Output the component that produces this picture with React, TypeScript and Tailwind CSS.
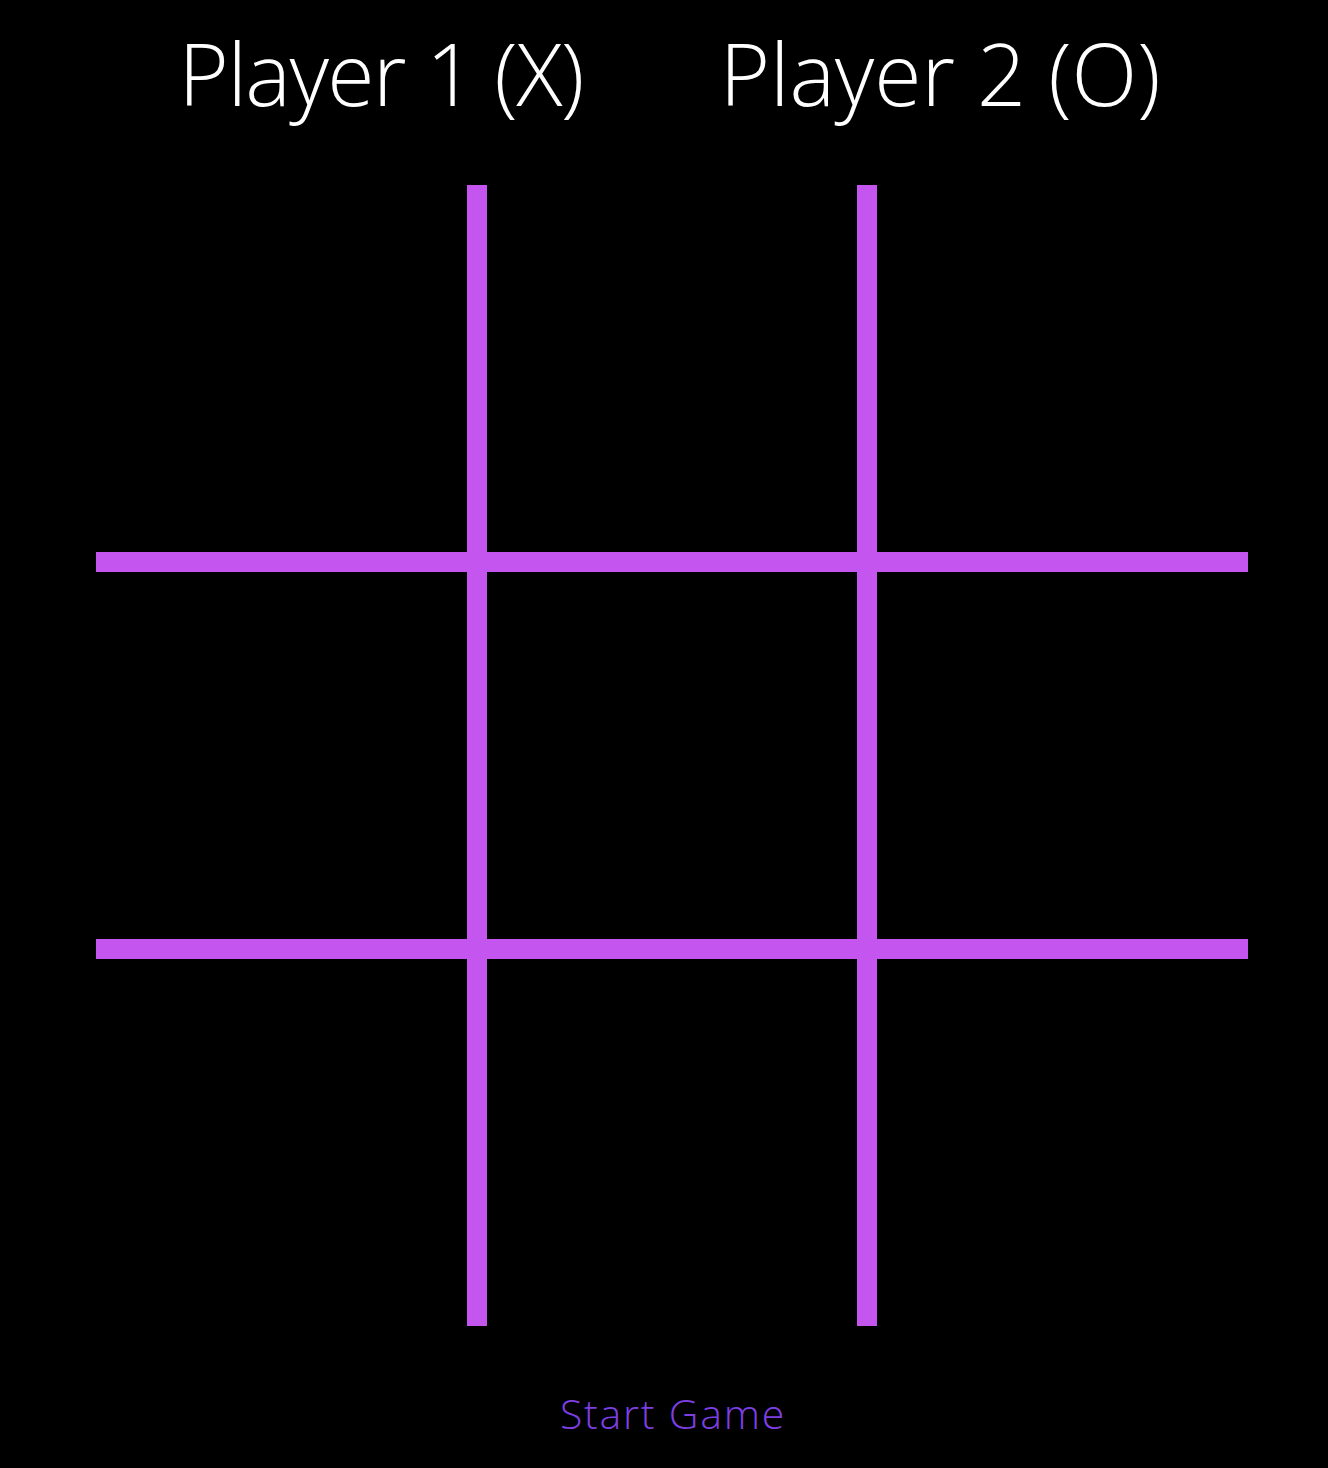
import React from "react";

export default function App() {
  const cells = Array.from({ length: 9 });
  return (
    <div
      className="bg-black w-full min-h-[1468px] flex flex-col"
      style={{ fontFamily: '"Open Sans", "Liberation Sans", sans-serif' }}
    >
      <div className="flex justify-center gap-[137px] pl-[11px] pt-[23px] h-[185px]">
        <h1 className="text-white text-[86px] font-light leading-[100px] tracking-[-1.5px]">Player 1 (X)</h1>
        <h1 className="text-white text-[86px] font-light leading-[100px] tracking-[-0.1px]">Player 2 (O)</h1>
      </div>
      <div className="ml-[96px] w-[1152px] h-[1141px] grid grid-cols-3 grid-rows-3 gap-[20px] bg-[#c455ee]">
        {cells.map((_, i) => (
          <div key={i} className="bg-black" />
        ))}
      </div>
      <div className="flex justify-center pl-[18px] pt-[62px]">
        <button className="text-[#7d3fe2] text-[41px] font-light leading-[50px] tracking-[1.8px]">Start Game</button>
      </div>
    </div>
  );
}
